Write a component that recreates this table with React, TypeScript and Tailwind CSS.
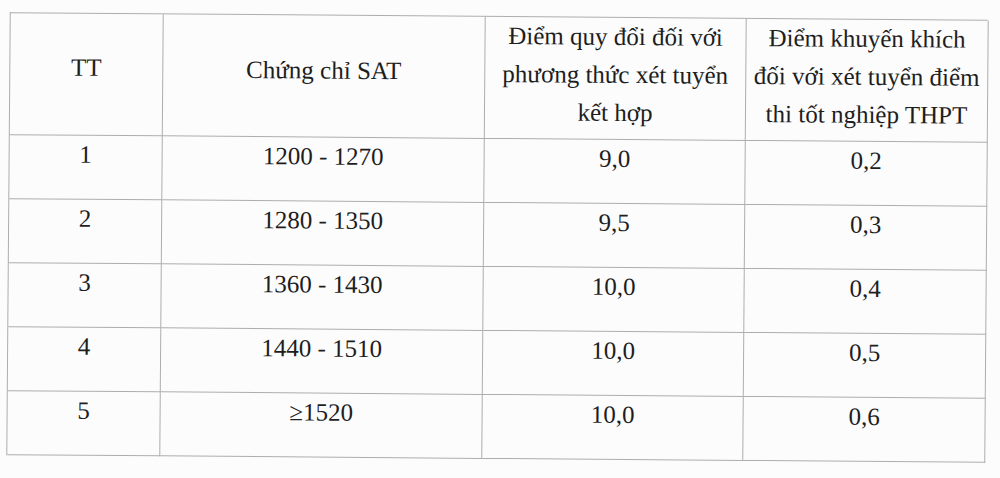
import React from "react";

// Bảng quy đổi điểm chứng chỉ SAT
const ROWS = [
  { tt: "1", sat: "1200 - 1270", quyDoi: "9,0", khuyenKhich: "0,2" },
  { tt: "2", sat: "1280 - 1350", quyDoi: "9,5", khuyenKhich: "0,3" },
  { tt: "3", sat: "1360 - 1430", quyDoi: "10,0", khuyenKhich: "0,4" },
  { tt: "4", sat: "1440 - 1510", quyDoi: "10,0", khuyenKhich: "0,5" },
  { tt: "5", sat: "≥1520", quyDoi: "10,0", khuyenKhich: "0,6" },
];

const cell = "border-r border-b border-[#adadad] text-center";

export default function App() {
  return (
    <div className="w-[1000px] h-[478px] overflow-hidden bg-[#fcfcfd] text-[#1e1e1e] text-[25px] leading-[38px] font-['Liberation_Serif']">
      <div className="pt-[16px] pl-[8px]">
        <div className="w-[978px] origin-center rotate-[0.45deg] grid grid-cols-[153px_322px_261px_242px] border-t border-l border-[#adadad]">
          {/* Header */}
          <div className={`${cell} h-[122px] pt-[35px]`}>TT</div>
          <div className={`${cell} h-[122px] pt-[36px]`}>Chứng chỉ SAT</div>
          <div className={`${cell} h-[122px] pt-0`}>
            Điểm quy đổi đối với
            <br />
            phương thức xét tuyển
            <br />
            kết hợp
          </div>
          <div className={`${cell} h-[122px] pt-0`}>
            Điểm khuyến khích
            <br />
            đối với xét tuyển điểm
            <br />
            thi tốt nghiệp THPT
          </div>

          {/* Body */}
          {ROWS.map((r) => (
            <React.Fragment key={r.tt}>
              <div className={`${cell} h-[64px]`}>{r.tt}</div>
              <div className={`${cell} h-[64px]`}>{r.sat}</div>
              <div className={`${cell} h-[64px]`}>{r.quyDoi}</div>
              <div className={`${cell} h-[64px]`}>{r.khuyenKhich}</div>
            </React.Fragment>
          ))}
        </div>
      </div>
    </div>
  );
}
